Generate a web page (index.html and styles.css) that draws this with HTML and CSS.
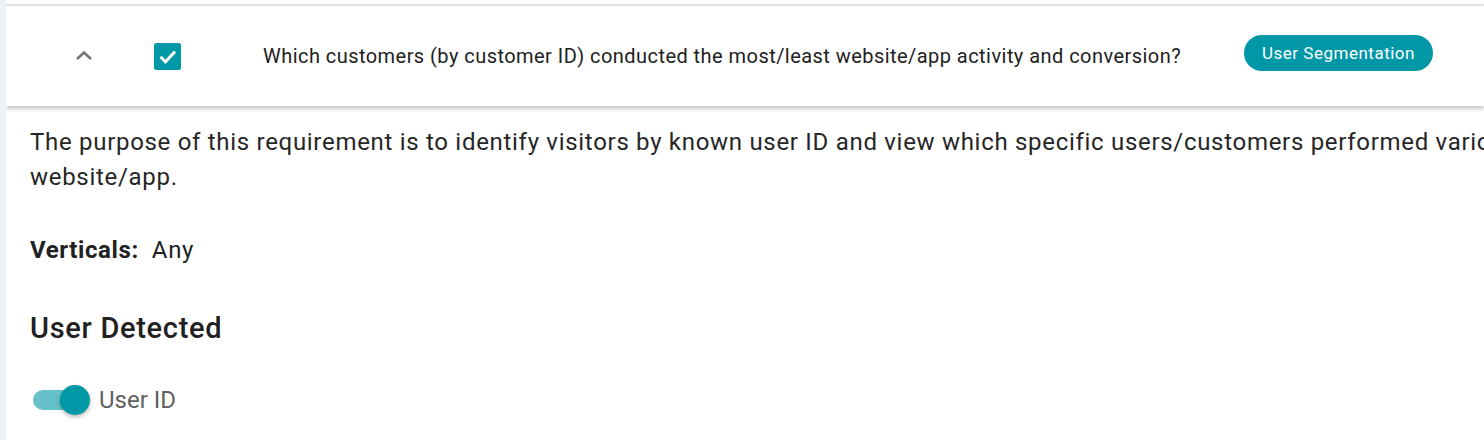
FILE: index.html
```html
<!DOCTYPE html>
<html lang="en">
<head>
    <meta charset="UTF-8">
    <meta name="viewport" content="width=device-width, initial-scale=1.0">
    <title>Requirement</title>
    <link rel="stylesheet" href="styles.css">
</head>
<body>
    <div class="page">
        <div class="top-gap"></div>
        <div class="req-card">
            <div class="req-header">
                <span class="chevron">
                    <svg width="20" height="12" viewBox="0 0 20 12">
                        <path d="M3 10 L10 3.5 L17 10" fill="none" stroke="#757575" stroke-width="2.6"/>
                    </svg>
                </span>
                <span class="check">
                    <svg width="27" height="27" viewBox="0 0 27 27">
                        <rect x="0" y="0" width="27" height="27" rx="2.5" fill="#0097a7"/>
                        <path d="M6.5 13.8 L11.5 18.8 L21 8.6" fill="none" stroke="#fff" stroke-width="3"/>
                    </svg>
                </span>
                <span class="req-title">Which customers (by customer ID) conducted the most/least website/app activity and conversion?</span>
                <span class="chip">User Segmentation</span>
            </div>
            <div class="req-body">
                <p class="desc">The purpose of this requirement is to identify visitors by known user ID and view which specific users/customers performed various actions on the website/app.</p>
                <p class="verticals"><b>Verticals:</b>&nbsp; Any</p>
                <h2 class="section">User Detected</h2>
                <label class="toggle-row">
                    <span class="toggle">
                        <span class="track"></span>
                        <span class="thumb"></span>
                    </span>
                    <span class="toggle-label">User ID</span>
                </label>
            </div>
        </div>
    </div>
</body>
</html>
```

FILE: styles.css
```css
body
{
    margin: 0;
    background-color: #eef2f4;
    font-family: Roboto, "Noto Sans", sans-serif;
    color: #212121;
    overflow: hidden;
}

.page
{
    height: 440px;
    margin-left: 6px;
    background-color: white;
    overflow: hidden;
}

.top-gap
{
    height: 4px;
    border-bottom: 2px solid #e4e4e4;
}

.req-card
{
    width: 1900px;
}

.req-header
{
    display: flex;
    align-items: center;
    width: 1478px;
    height: 100px;
    background-color: white;
    box-shadow: 0 3px 4px rgba(0, 0, 0, 0.22);
    position: relative;
}

.chevron
{
    display: flex;
    margin-left: 68px;
    margin-top: -2px;
}

.check
{
    display: flex;
    margin-left: 60px;
}

.req-title
{
    margin-left: 82px;
    font-size: 20px;
    letter-spacing: 0.45px;
}

.chip
{
    margin-left: 63px;
    margin-top: -6px;
    background-color: #0097a7;
    color: white;
    font-size: 17px;
    height: 36px;
    line-height: 36px;
    padding: 0 18px;
    border-radius: 18px;
    letter-spacing: 0.5px;
}

.req-body
{
    padding: 19px 24px 0 24px;
}

.desc
{
    margin: 0;
    max-width: 1800px;
    font-size: 24px;
    line-height: 35px;
    letter-spacing: 0.7px;
    color: #262626;
}

.verticals
{
    margin: 38px 0 0 0;
    font-size: 24px;
    line-height: 35px;
    letter-spacing: 0.6px;
}

.section
{
    margin: 43px 0 0 0;
    font-size: 29px;
    line-height: 35px;
    font-weight: 500;
    letter-spacing: 0.7px;
}

.toggle-row
{
    display: flex;
    align-items: center;
    margin-top: 39px;
}

.toggle
{
    position: relative;
    width: 60px;
    height: 30px;
}

.track
{
    position: absolute;
    left: 3px;
    top: 5px;
    width: 48px;
    height: 20px;
    border-radius: 10px;
    background-color: #66c1ca;
}

.thumb
{
    position: absolute;
    left: 30px;
    top: 0;
    width: 30px;
    height: 30px;
    border-radius: 50%;
    background-color: #0097a7;
    box-shadow: 0 2px 4px rgba(0, 0, 0, 0.3);
}

.toggle-label
{
    margin-left: 9px;
    font-size: 24px;
    color: #616161;
}
```
